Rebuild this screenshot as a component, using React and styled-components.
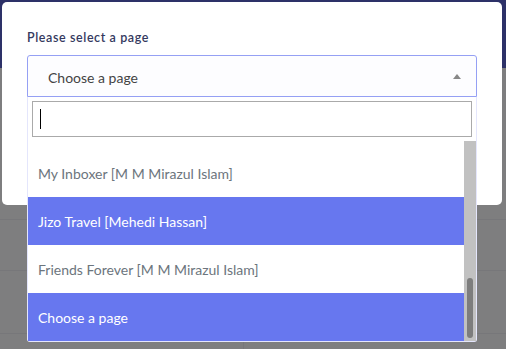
import React from 'react';
import styled, { createGlobalStyle } from 'styled-components';

const GlobalStyle = createGlobalStyle`
  html, body {
    margin: 0;
    padding: 0;
    width: 506px;
    height: 349px;
    overflow: hidden;
    font-family: Lato, "Noto Sans", sans-serif;
  }
`;

const Page = styled.div`
  position: relative;
  width: 506px;
  height: 349px;
  background: #fdfdff;
  overflow: hidden;
`;

const Navbar = styled.div`
  height: 68px;
  background: #5a62d0;
`;

const TableRow = styled.div`
  height: ${p => p.h}px;
  border-bottom: 1px solid #eeeef4;
  display: flex;
`;

const Cell = styled.div`
  width: 243px;
  border-right: ${p => (p.divider ? '1px solid #eeeef4' : 'none')};
`;

const Backdrop = styled.div`
  position: absolute;
  inset: 0;
  background: rgba(0, 0, 0, 0.5);
`;

const Modal = styled.div`
  position: absolute;
  top: 2px;
  left: 2px;
  width: 500px;
  height: 203px;
  box-sizing: border-box;
  padding: 29px 25px 0;
  background: #fff;
  border-radius: 5px;
`;

const Label = styled.label`
  display: block;
  font-size: 12.5px;
  font-weight: 600;
  letter-spacing: 0.6px;
  color: #34395e;
  line-height: 14px;
  margin-bottom: 10px;
`;

const SelectWrap = styled.div`
  position: relative;
`;

const Selection = styled.div`
  height: 42px;
  box-sizing: border-box;
  display: flex;
  align-items: center;
  justify-content: space-between;
  padding: 2px 15px 0 20px;
  border: 1px solid #95a0f4;
  border-radius: 3px 3px 0 0;
  background: #fdfdff;
  font-size: 14px;
  color: #444;
`;

const Arrow = styled.span`
  width: 0;
  height: 0;
  border-left: 4px solid transparent;
  border-right: 4px solid transparent;
  border-bottom: 5px solid #888;
  margin-top: -2px;
`;

const Dropdown = styled.div`
  position: absolute;
  top: 42px;
  left: 0;
  right: 0;
  background: #fff;
  border: 1px solid #e4e6fc;
  border-top: none;
  border-radius: 0 0 3px 3px;
  display: flex;
  flex-direction: column;
`;

const SearchBox = styled.div`
  padding: 4px;
`;

const SearchInput = styled.div`
  height: 36px;
  box-sizing: border-box;
  border: 1px solid #aaa;
  display: flex;
  align-items: center;
  padding-left: 7px;
`;

const Caret = styled.span`
  width: 1px;
  height: 20px;
  background: #000;
`;

const Results = styled.div`
  height: 200px;
  display: flex;
`;

const Options = styled.ul`
  flex: 1;
  margin: 0;
  padding: 0;
  list-style: none;
  overflow: hidden;
  display: flex;
  flex-direction: column;
  justify-content: flex-end;
`;

const Option = styled.li`
  flex: none;
  height: 48px;
  display: flex;
  align-items: center;
  padding: 1px 10px 0;
  box-sizing: border-box;
  font-size: 14px;
  color: ${p => (p.active ? '#fff' : '#6c757d')};
  background: ${p => (p.active ? '#6777ef' : '#fff')};
  white-space: nowrap;
`;

const Track = styled.div`
  width: 12px;
  background: #c1c1c1;
  display: flex;
  flex-direction: column;
  justify-content: flex-end;
  align-items: center;
  padding-bottom: 3px;
  box-sizing: border-box;
`;

const Thumb = styled.div`
  width: 6px;
  height: 60px;
  border-radius: 3px;
  background: #7d7d7d;
`;

const options = [
  { name: 'Dhaka Deals [M M Mirazul Islam]' },
  { name: 'Travel Buddy [Mehedi Hassan]' },
  { name: 'My Inboxer [M M Mirazul Islam]' },
  { name: 'Jizo Travel [Mehedi Hassan]', active: true },
  { name: 'Friends Forever [M M Mirazul Islam]' },
  { name: 'Choose a page', active: true },
];

export default function App() {
  return (
    <Page>
      <GlobalStyle />
      <Navbar />
      <TableRow h={151} />
      <TableRow h={50} />
      <TableRow h={62} />
      <TableRow h={20}>
        <Cell divider />
        <Cell />
      </TableRow>
      <Backdrop />
      <Modal>
        <Label>Please select a page</Label>
        <SelectWrap>
          <Selection>
            <span>Choose a page</span>
            <Arrow />
          </Selection>
          <Dropdown>
            <SearchBox>
              <SearchInput>
                <Caret />
              </SearchInput>
            </SearchBox>
            <Results>
              <Options>
                {options.map(o => (
                  <Option key={o.name} active={o.active}>{o.name}</Option>
                ))}
              </Options>
              <Track>
                <Thumb />
              </Track>
            </Results>
          </Dropdown>
        </SelectWrap>
      </Modal>
    </Page>
  );
}
